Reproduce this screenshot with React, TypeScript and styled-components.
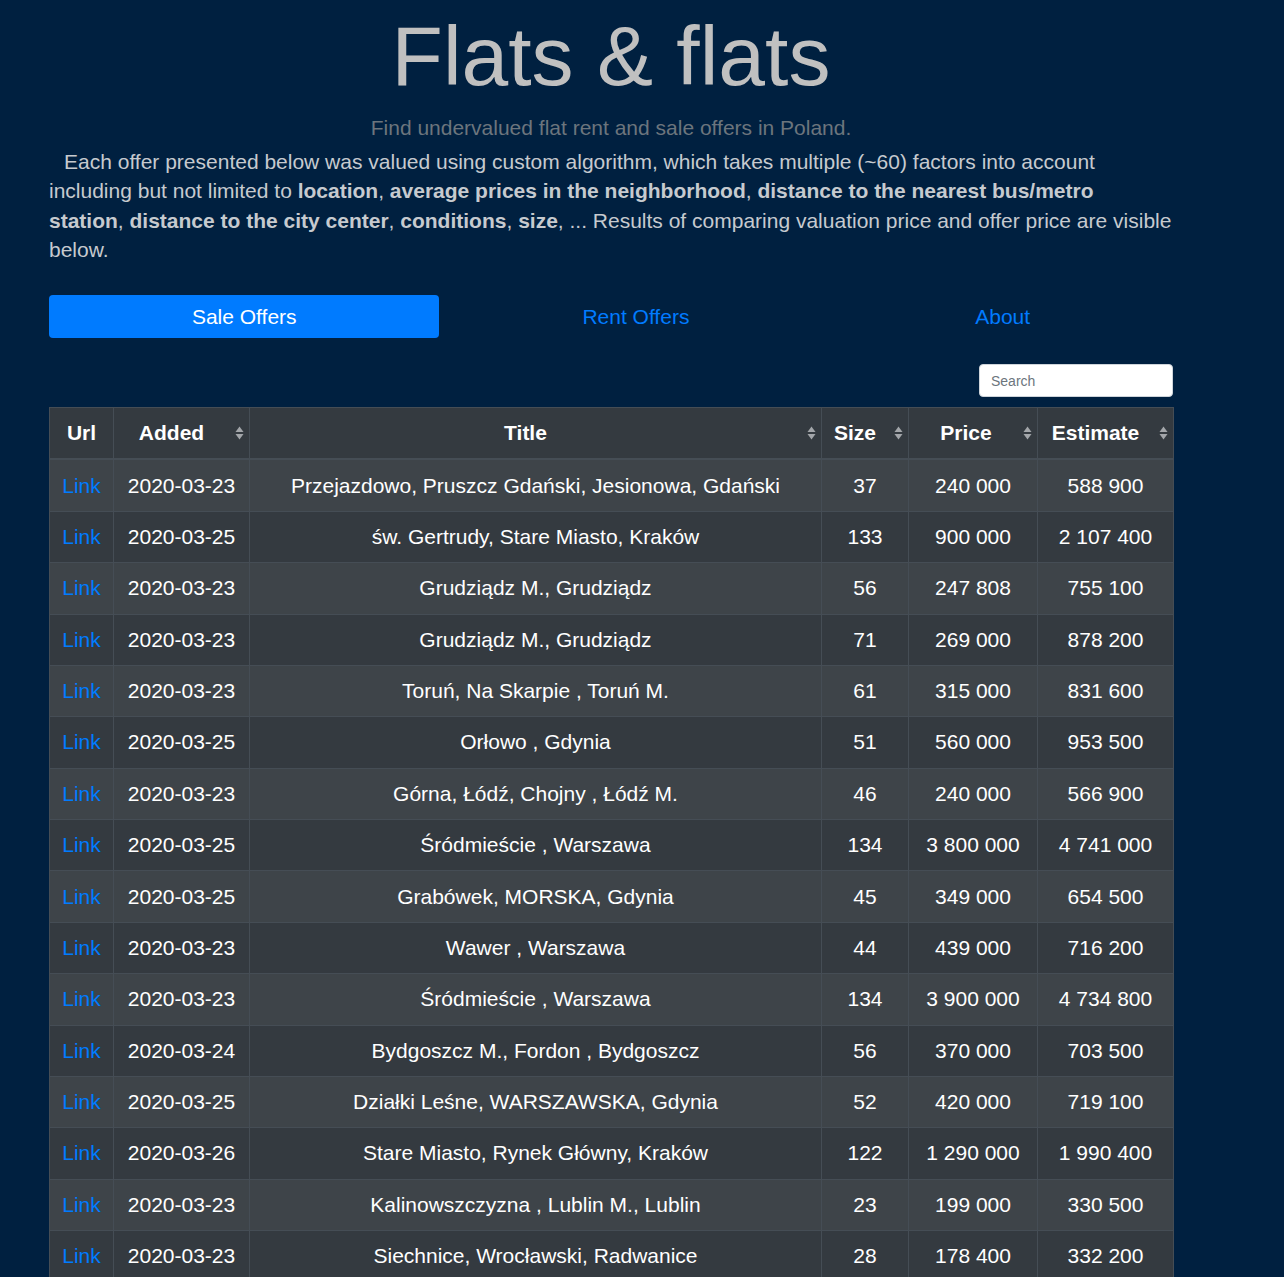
import React from "react";
import styled, { createGlobalStyle } from "styled-components";

const GlobalStyle = createGlobalStyle`
  html, body {
    margin: 0;
    padding: 0;
    background: #002040;
  }
  body {
    font-family: "Liberation Sans", Arial, sans-serif;
  }
`;

const Page = styled.div`
  width: 1124px;
  margin-left: 49px;
  padding-top: 6px;
`;

const Title = styled.h1`
  margin: 0;
  font-size: 84px;
  font-weight: 400;
  line-height: 1.2;
  color: #c0c0c0;
  text-align: center;
`;

const Lead = styled.p`
  margin: 6px 0 0;
  font-size: 21px;
  line-height: 30px;
  color: #6c757d;
  text-align: center;
`;

const Intro = styled.p`
  margin: 4px 0 0;
  font-size: 21px;
  line-height: 29.4px;
  color: #c6cacf;
  text-indent: 15px;

  b {
    font-weight: 700;
  }
`;

const Nav = styled.nav`
  display: flex;
  margin-top: 31px;
`;

const NavItem = styled.a<{ $active?: boolean }>`
  flex: 1 1 auto;
  text-align: center;
  padding: 6.5px 16px;
  font-size: 21px;
  line-height: 30px;
  border-radius: 4px;
  cursor: pointer;
  color: ${(p) => (p.$active ? "#ffffff" : "#007bff")};
  background: ${(p) => (p.$active ? "#007bff" : "transparent")};
`;

const SearchRow = styled.div`
  display: flex;
  justify-content: flex-end;
  margin-top: 26px;
`;

const SearchInput = styled.input`
  box-sizing: border-box;
  width: 194px;
  height: 33px;
  padding: 4px 11px;
  font-family: "Liberation Sans", Arial, sans-serif;
  font-size: 14px;
  color: #495057;
  background: #fff;
  border: 1px solid #ced4da;
  border-radius: 4px;
  outline: none;

  &::placeholder {
    color: #6c757d;
  }
`;

const Table = styled.table`
  margin-top: 10px;
  width: 1124px;
  border-collapse: collapse;
  table-layout: fixed;
  background: #343a40;
  color: #fff;
  font-size: 21px;
`;

const HeadCell = styled.th<{ $padRight: number }>`
  position: relative;
  border: 1px solid #454d55;
  border-bottom-width: 2px;
  padding: 10px ${(p) => p.$padRight}px 10px 8px;
  line-height: 30px;
  font-weight: 700;
  text-align: center;
  vertical-align: middle;
  white-space: nowrap;
`;

const Caret = styled.svg`
  position: absolute;
  right: 5px;
  top: 50%;
  margin-top: -7px;
`;

const Row = styled.tr`
  &:nth-child(odd) {
    background: rgba(255, 255, 255, 0.05);
  }
`;

const Cell = styled.td`
  border: 1px solid #454d55;
  padding: 10.2px 8px;
  line-height: 30px;
  text-align: center;
  vertical-align: middle;
  white-space: nowrap;
`;

const LinkText = styled.a`
  color: #007bff;
  text-decoration: none;
  cursor: pointer;
`;

const SortCaret = () => (
  <Caret width="9" height="14" viewBox="0 0 9 14">
    <polygon points="4.5,0.5 8.5,6 0.5,6" fill="#a3a6aa" />
    <polygon points="0.5,8 8.5,8 4.5,13.5" fill="#a3a6aa" />
  </Caret>
);

type Offer = [string, string, string, string, string];

const offers: Offer[] = [
  ["2020-03-23", "Przejazdowo, Pruszcz Gdański, Jesionowa, Gdański", "37", "240 000", "588 900"],
  ["2020-03-25", "św. Gertrudy, Stare Miasto, Kraków", "133", "900 000", "2 107 400"],
  ["2020-03-23", "Grudziądz M., Grudziądz", "56", "247 808", "755 100"],
  ["2020-03-23", "Grudziądz M., Grudziądz", "71", "269 000", "878 200"],
  ["2020-03-23", "Toruń, Na Skarpie , Toruń M.", "61", "315 000", "831 600"],
  ["2020-03-25", "Orłowo , Gdynia", "51", "560 000", "953 500"],
  ["2020-03-23", "Górna, Łódź, Chojny , Łódź M.", "46", "240 000", "566 900"],
  ["2020-03-25", "Śródmieście , Warszawa", "134", "3 800 000", "4 741 000"],
  ["2020-03-25", "Grabówek, MORSKA, Gdynia", "45", "349 000", "654 500"],
  ["2020-03-23", "Wawer , Warszawa", "44", "439 000", "716 200"],
  ["2020-03-23", "Śródmieście , Warszawa", "134", "3 900 000", "4 734 800"],
  ["2020-03-24", "Bydgoszcz M., Fordon , Bydgoszcz", "56", "370 000", "703 500"],
  ["2020-03-25", "Działki Leśne, WARSZAWSKA, Gdynia", "52", "420 000", "719 100"],
  ["2020-03-26", "Stare Miasto, Rynek Główny, Kraków", "122", "1 290 000", "1 990 400"],
  ["2020-03-23", "Kalinowszczyzna , Lublin M., Lublin", "23", "199 000", "330 500"],
  ["2020-03-23", "Siechnice, Wrocławski, Radwanice", "28", "178 400", "332 200"],
];

const columns: { label: string; width: number; sortable: boolean; padRight: number }[] = [
  { label: "Url", width: 64, sortable: false, padRight: 8 },
  { label: "Added", width: 136, sortable: true, padRight: 28 },
  { label: "Title", width: 572, sortable: true, padRight: 28 },
  { label: "Size", width: 87, sortable: true, padRight: 28 },
  { label: "Price", width: 129, sortable: true, padRight: 22 },
  { label: "Estimate", width: 136, sortable: true, padRight: 28 },
];

export default function App() {
  return (
    <>
      <GlobalStyle />
      <Page>
        <Title>Flats &amp; flats</Title>
        <Lead>Find undervalued flat rent and sale offers in Poland.</Lead>
        <Intro>
          Each offer presented below was valued using custom algorithm, which takes multiple (~60) factors
          into account including but not limited to <b>location</b>, <b>average prices in the neighborhood</b>,{" "}
          <b>distance to the nearest bus/metro station</b>, <b>distance to the city center</b>,{" "}
          <b>conditions</b>, <b>size</b>, ... Results of comparing valuation price and offer price are visible
          below.
        </Intro>
        <Nav>
          <NavItem $active>Sale Offers</NavItem>
          <NavItem>Rent Offers</NavItem>
          <NavItem>About</NavItem>
        </Nav>
        <SearchRow>
          <SearchInput placeholder="Search" />
        </SearchRow>
        <Table>
          <colgroup>
            {columns.map((c) => (
              <col key={c.label} style={{ width: c.width }} />
            ))}
          </colgroup>
          <thead>
            <tr>
              {columns.map((c) => (
                <HeadCell key={c.label} $padRight={c.padRight}>
                  {c.label}
                  {c.sortable && <SortCaret />}
                </HeadCell>
              ))}
            </tr>
          </thead>
          <tbody>
            {offers.map((o, i) => (
              <Row key={i}>
                <Cell>
                  <LinkText>Link</LinkText>
                </Cell>
                {o.map((v, j) => (
                  <Cell key={j}>{v}</Cell>
                ))}
              </Row>
            ))}
          </tbody>
        </Table>
      </Page>
    </>
  );
}
